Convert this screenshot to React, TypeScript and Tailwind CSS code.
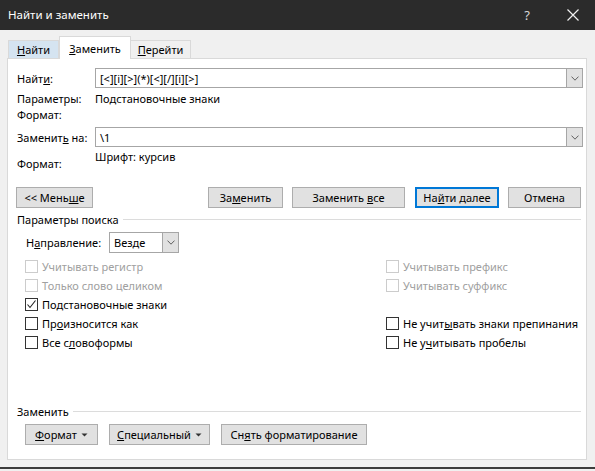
import React from "react";

const F = { fontFamily: '"Noto Sans", "Open Sans", sans-serif' };

function Chevron() {
  return (
    <svg width="8" height="5" viewBox="0 0 8 5" fill="none">
      <path d="M0.5 0.6 L4 4.2 L7.5 0.6" stroke="#606060" strokeWidth="1" />
    </svg>
  );
}

function Combo({ value, w }: { value: string; w: string }) {
  return (
    <div className={`${w} h-[20px] border border-[#a6a6a6] bg-white flex items-stretch shrink-0`}>
      <div className="flex-1 pl-[4px] flex items-center text-[11px] leading-none whitespace-nowrap">{value}</div>
      <div className="w-[16px] bg-[#e1e1e1] border-l border-[#a6a6a6] flex items-center justify-center">
        <Chevron />
      </div>
    </div>
  );
}

function Btn({ children, w, def }: { children: React.ReactNode; w: string; def?: boolean }) {
  return (
    <div
      className={`${w} h-[21px] flex items-center justify-center text-[11px] leading-none bg-[#e1e1e1] ${
        def ? "border-2 border-[#0078d7]" : "border border-[#adadad]"
      }`}
    >
      <span className="whitespace-pre flex items-center">{children}</span>
    </div>
  );
}

function Check({ label, disabled, checked }: { label: React.ReactNode; disabled?: boolean; checked?: boolean }) {
  return (
    <div className="flex items-center h-[19px]">
      <div
        className={`w-[13px] h-[13px] shrink-0 border bg-white flex items-center justify-center ${
          disabled ? "border-[#cccccc]" : "border-[#333333]"
        }`}
      >
        {checked && (
          <svg width="11" height="11" viewBox="0 0 11 11" fill="none">
            <path d="M1.5 5.5 L4 8.5 L9.5 1.5" stroke="#222" strokeWidth="1.1" />
          </svg>
        )}
      </div>
      <span className={`ml-[4px] text-[11px] leading-none whitespace-nowrap ${disabled ? "text-[#a0a0a0]" : "text-black"}`}>
        {label}
      </span>
    </div>
  );
}

function Dropdot() {
  return (
    <svg width="7" height="4" viewBox="0 0 7 4" className="ml-[4px]">
      <path d="M0.5 0.5 L6.5 0.5 L3.5 3.5 Z" fill="#333" />
    </svg>
  );
}

export default function App() {
  return (
    <div className="w-[595px] h-[471px] bg-[#f0f0f0] overflow-hidden text-black flex flex-col" style={F}>
      {/* Title bar */}
      <div className="h-[30px] bg-[#2b2b2b] flex items-center pl-[8px] text-white shrink-0">
        <span className="text-[11.5px] leading-none">Найти и заменить</span>
        <span className="ml-auto text-[13px] leading-none mr-[37px] mt-[1px] text-[#d8d8d8]">?</span>
        <svg width="12" height="12" viewBox="0 0 12 12" className="mr-[16px]">
          <path d="M0.5 0.5 L11.5 11.5 M11.5 0.5 L0.5 11.5" stroke="#f0f0f0" strokeWidth="1.2" />
        </svg>
      </div>

      {/* Tabs */}
      <div className="flex items-end pl-[8px] mt-[7px] h-[21px] relative z-10 shrink-0">
        <div className="w-[51px] h-[18px] bg-[#d5e4f1] border border-[#d9d9d9] border-b-0 flex items-center justify-center text-[11px] leading-none">
          <span><u>Н</u>айти</span>
        </div>
        <div className="w-[72px] h-[23px] bg-white border border-[#d9d9d9] border-b-0 -mb-[1px] flex items-center justify-center text-[11px] leading-none">
          <span><u>З</u>аменить</span>
        </div>
        <div className="w-[60px] h-[18px] bg-[#f0f0f0] border border-[#d9d9d9] border-l-0 border-b-0 flex items-center justify-center text-[11px] leading-none">
          <span><u>П</u>ерейти</span>
        </div>
      </div>

      {/* Panel */}
      <div className="ml-[7px] w-[580px] h-[402px] bg-white border border-[#d9d9d9] pl-[8px] flex flex-col shrink-0">
        {/* Find */}
        <div className="flex items-center mt-[9px] h-[20px]">
          <div className="w-[79px] shrink-0 pl-[1px] text-[11px] leading-none">Найт<u>и</u>:</div>
          <Combo value="[<][i][>](*)[<][/][i][>]" w="w-[488px]" />
        </div>
        <div className="flex h-[16px] items-center mt-[2px]">
          <div className="w-[79px] shrink-0 pl-[1px] text-[11px] leading-none">Параметры:</div>
          <div className="text-[11px] leading-none">Подстановочные знаки</div>
        </div>
        <div className="flex h-[17px] items-center">
          <div className="w-[79px] pl-[1px] text-[11px] leading-none">Формат:</div>
        </div>

        {/* Replace */}
        <div className="flex items-center mt-[4px] h-[20px]">
          <div className="w-[79px] shrink-0 pl-[1px] text-[11px] leading-none">Заменит<u>ь</u> на:</div>
          <Combo value="\1" w="w-[488px]" />
        </div>
        <div className="flex mt-[1px] h-[22px]">
          <div className="w-[79px] shrink-0 pl-[1px] text-[11px] leading-none pt-[10px]">Формат:</div>
          <div className="text-[11px] leading-none pt-[3px]">Шрифт: курсив</div>
        </div>

        {/* Buttons */}
        <div className="flex mt-[17px]">
          <Btn w="w-[77px]">&lt;&lt; Мень<u>ш</u>е</Btn>
          <div className="ml-[115px]">
            <Btn w="w-[75px]">За<u>м</u>енить</Btn>
          </div>
          <div className="ml-[9px]">
            <Btn w="w-[113px]">Заменить <u>в</u>се</Btn>
          </div>
          <div className="ml-[10px]">
            <Btn w="w-[84px]" def>На<u>й</u>ти далее</Btn>
          </div>
          <div className="ml-[9px]">
            <Btn w="w-[73px]">Отмена</Btn>
          </div>
        </div>

        {/* Search params group */}
        <div className="flex items-center h-[16px] mt-[3px] w-[565px]">
          <span className="pl-[1px] text-[11px] leading-none whitespace-nowrap">Параметры поиска</span>
          <div className="flex-1 h-px bg-[#dcdcdc] ml-[4px]" />
        </div>

        <div className="flex items-center mt-[5px] pl-[10px] h-[21px]">
          <div className="w-[83px] shrink-0 text-[11px] leading-none">Н<u>а</u>правление:</div>
          <Combo value="Везде" w="w-[70px] h-[21px]" />
        </div>

        <div className="flex mt-[4px] pl-[9px]">
          <div className="w-[361px] shrink-0 flex flex-col">
            <Check disabled label="Учитывать регистр" />
            <Check disabled label="Только слово целиком" />
            <Check checked label="Подстановочные знаки" />
            <Check label={<>Пр<u>о</u>износится как</>} />
            <Check label={<>Все с<u>л</u>овоформы</>} />
          </div>
          <div className="flex flex-col">
            <Check disabled label="Учитывать префикс" />
            <Check disabled label="Учитывать суффикс" />
            <div className="h-[19px]" />
            <Check label={<>Не учит<u>ы</u>вать знаки препинания</>} />
            <Check label={<>Не у<u>ч</u>итывать пробелы</>} />
          </div>
        </div>

        {/* Replace group */}
        <div className="flex items-center h-[16px] mt-[51px] w-[565px]">
          <span className="pl-[1px] text-[11px] leading-none whitespace-nowrap">Заменить</span>
          <div className="flex-1 h-px bg-[#dcdcdc] ml-[4px]" />
        </div>

        <div className="flex mt-[5px] pl-[9px]">
          <Btn w="w-[73px]">
            <u>Ф</u>ормат<Dropdot />
          </Btn>
          <div className="ml-[11px]">
            <Btn w="w-[101px]">
              <u>С</u>пециальный<Dropdot />
            </Btn>
          </div>
          <div className="ml-[11px]">
            <Btn w="w-[146px]">Сн<u>я</u>ть форматирование</Btn>
          </div>
        </div>
      </div>

      <div className="mt-[7px] h-[2px] bg-[#3c3c3c] shrink-0" />
    </div>
  );
}
